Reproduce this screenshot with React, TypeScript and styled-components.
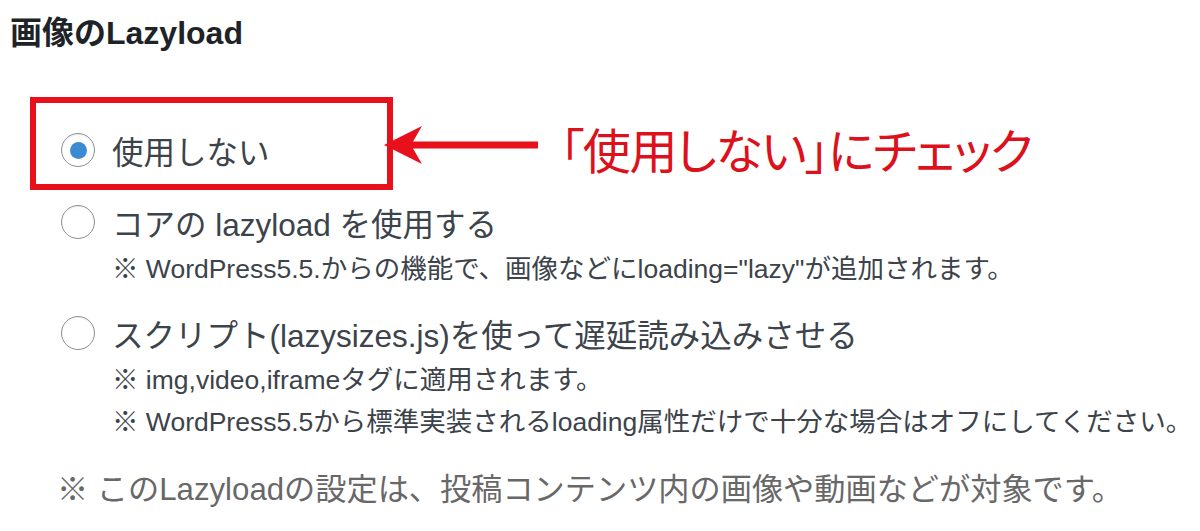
import React from "react";
import styled, { createGlobalStyle } from "styled-components";

const Global = createGlobalStyle`
  html, body { margin: 0; padding: 0; background: #ffffff; }
  body { font-family: "Liberation Sans", "Noto Sans CJK JP", sans-serif; }
`;

const Page = styled.div`
  width: 1200px;
  height: 531px;
  overflow: hidden;
  padding-left: 10px;
  box-sizing: border-box;
`;

const Title = styled.h2`
  margin: 15px 0 0;
  font-size: 32px;
  line-height: 36px;
  font-weight: 700;
  color: #1d2327;
`;

const CalloutRow = styled.div`
  display: flex;
  align-items: flex-start;
  margin: 46px 0 0 20px;
`;

const Highlight = styled.div`
  width: 363px;
  height: 93px;
  box-sizing: border-box;
  border: 6px solid #e8101a;
  padding: 29px 0 0 25px;
`;

const ArrowSvg = styled.svg`
  flex: none;
  margin-top: 27px;
  margin-left: -9px;
`;

const CalloutText = styled.div`
  margin-top: 23px;
  margin-left: 22px;
  font-family: "Noto Sans CJK JP", sans-serif;
  font-feature-settings: "palt" 1;
  font-size: 48px;
  line-height: 56px;
  letter-spacing: -1.3px;
  font-weight: 400;
  color: #dc111b;
  white-space: nowrap;
`;

const Options = styled.div`
  padding-left: 51px;
`;

const Option = styled.div<{ $gap: number }>`
  margin-top: ${(p) => p.$gap}px;
`;

const Row = styled.label`
  display: flex;
  align-items: center;
  gap: 17px;
  height: 36px;
  font-size: 31.5px;
  color: #3c434a;
  white-space: nowrap;
`;

const Radio = styled.span<{ $checked?: boolean }>`
  flex: none;
  width: 34px;
  height: 34px;
  box-sizing: border-box;
  border-radius: 50%;
  border: 1.5px solid #8c8f94;
  background: #fff;
  box-shadow: inset 0 1px 2px rgba(0, 0, 0, 0.08);
  display: flex;
  align-items: center;
  justify-content: center;
  &::after {
    content: "";
    display: ${(p) => (p.$checked ? "block" : "none")};
    width: 17px;
    height: 17px;
    border-radius: 50%;
    background: #3b8bd3;
  }
`;

const Notes = styled.div`
  margin-top: 8px;
  padding-left: 51px;
`;

const Note = styled.p`
  margin: 0;
  font-size: 26.5px;
  line-height: 42px;
  color: #3c434a;
  white-space: nowrap;
`;

const Footer = styled.p`
  margin: 27px 0 0 47px;
  font-size: 31.2px;
  line-height: 40px;
  color: #686868;
  white-space: nowrap;
`;

export default function App() {
  return (
    <>
      <Global />
      <Page>
        <Title>画像のLazyload</Title>
        <CalloutRow>
          <Highlight>
            <Row>
              <Radio $checked />
              使用しない
            </Row>
          </Highlight>
          <ArrowSvg width="154" height="42" viewBox="0 0 154 42">
            <rect x="24" y="17.5" width="130" height="7" fill="#e8101a" />
            <polygon points="0,21 38,2 27,21 38,40" fill="#e8101a" />
          </ArrowSvg>
          <CalloutText>「使用しない」にチェック</CalloutText>
        </CalloutRow>
        <Options>
          <Option $gap={14}>
            <Row>
              <Radio />
              コアの lazyload を使用する
            </Row>
            <Notes>
              <Note>※ WordPress5.5.からの機能で、画像などにloading="lazy"が追加されます。</Note>
            </Notes>
          </Option>
          <Option $gap={25}>
            <Row>
              <Radio />
              スクリプト(lazysizes.js)を使って遅延読み込みさせる
            </Row>
            <Notes>
              <Note>※ img,video,iframeタグに適用されます。</Note>
              <Note>※ WordPress5.5から標準実装されるloading属性だけで十分な場合はオフにしてください。</Note>
            </Notes>
          </Option>
        </Options>
        <Footer>※ このLazyloadの設定は、投稿コンテンツ内の画像や動画などが対象です。</Footer>
      </Page>
    </>
  );
}
